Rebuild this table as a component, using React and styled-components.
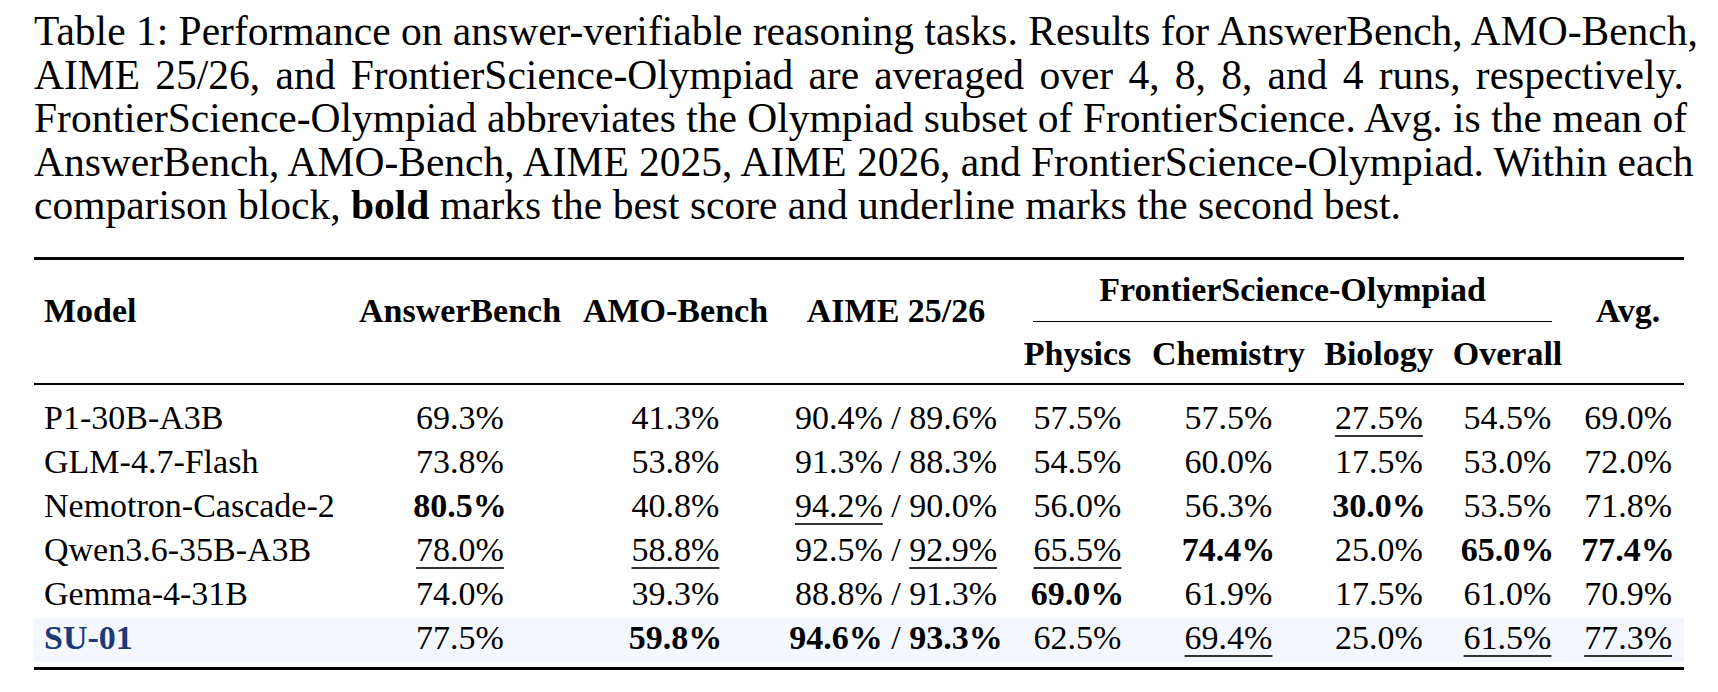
import styled, { createGlobalStyle } from 'styled-components'

const GlobalStyle = createGlobalStyle`
  html, body {
    margin: 0;
    padding: 0;
    background: #ffffff;
  }
  body {
    font-family: "Liberation Serif", "Times New Roman", serif;
    color: #000000;
  }
`

const Page = styled.div`
  width: 1718px;
  padding: 10px 0 0 34px;
  box-sizing: border-box;
`

const Caption = styled.div`
  width: 1650px;
  font-size: 41.5px;
  line-height: 43.5px;
  margin-bottom: 29.5px;
`

const CaptionLine = styled.div`
  text-align: ${(p) => (p.$last ? 'left' : 'justify')};
  text-align-last: ${(p) => (p.$last ? 'left' : 'justify')};
  white-space: nowrap;
`

const Table = styled.table`
  width: 1650px;
  table-layout: fixed;
  border-collapse: collapse;
  font-size: 34px;
  border-top: 3px solid #000;
  border-bottom: 3px solid #000;
`

const HeadRow = styled.tr`
  border-bottom: ${(p) => (p.$rule ? '2px solid #000' : 'none')};
`

const HeadCell = styled.th`
  font-weight: bold;
  line-height: 40px;
  padding: 31px 0 0 ${(p) => (p.$left ? '10px' : '0')};
  text-align: ${(p) => (p.$left ? 'left' : 'center')};
  vertical-align: top;
  white-space: nowrap;
`

const GroupCell = styled.th`
  font-weight: bold;
  line-height: 40px;
  padding: 10px 20px 0;
  text-align: center;
  white-space: nowrap;
`

const GroupLabel = styled.div`
  padding-bottom: 11px;
  border-bottom: 1.5px solid #000;
`

const SubCell = styled.th`
  font-weight: bold;
  line-height: 40px;
  padding: 12px 0 9px;
  text-align: center;
  white-space: nowrap;
`

const Row = styled.tr`
  background: ${(p) => (p.$hl ? '#f4f7fd' : 'transparent')};
`

const Cell = styled.td`
  line-height: 40px;
  padding: ${(p) => (p.$first ? '13px' : '0')} 0 4px ${(p) => (p.$left ? '10px' : '0')};
  text-align: ${(p) => (p.$left ? 'left' : 'center')};
  white-space: nowrap;
`

const ModelName = styled.span`
  font-weight: ${(p) => (p.$ours ? 'bold' : 'normal')};
  color: ${(p) => (p.$ours ? '#1c3a78' : '#000')};
`

const Val = styled.span`
  font-weight: ${(p) => (p.$bold ? 'bold' : 'normal')};
  text-decoration: ${(p) => (p.$under ? 'underline' : 'none')};
  text-decoration-thickness: 2px;
  text-underline-offset: 6px;
  text-decoration-color: #333;
  text-decoration-skip-ink: none;
`

const SpacerRow = styled.tr`
  height: 6px;
`

const cols = [314, 224, 207, 234, 129, 173, 128, 129, 112]

const rows = [
  ['P1-30B-A3B', '69.3%', '41.3%', ['90.4%', '89.6%'], '57.5%', '57.5%', '_27.5%', '54.5%', '69.0%'],
  ['GLM-4.7-Flash', '73.8%', '53.8%', ['91.3%', '88.3%'], '54.5%', '60.0%', '17.5%', '53.0%', '72.0%'],
  ['Nemotron-Cascade-2', '*80.5%', '40.8%', ['_94.2%', '90.0%'], '56.0%', '56.3%', '*30.0%', '53.5%', '71.8%'],
  ['Qwen3.6-35B-A3B', '_78.0%', '_58.8%', ['92.5%', '_92.9%'], '_65.5%', '*74.4%', '25.0%', '*65.0%', '*77.4%'],
  ['Gemma-4-31B', '74.0%', '39.3%', ['88.8%', '91.3%'], '*69.0%', '61.9%', '17.5%', '61.0%', '70.9%'],
  ['SU-01', '77.5%', '*59.8%', ['*94.6%', '*93.3%'], '62.5%', '_69.4%', '25.0%', '_61.5%', '_77.3%'],
]

function Score({ s }) {
  const bold = s[0] === '*'
  const under = s[0] === '_'
  const text = bold || under ? s.slice(1) : s
  return <Val $bold={bold} $under={under}>{text}</Val>
}

export default function App() {
  return (
    <Page>
      <GlobalStyle />
      <Caption>
        <CaptionLine>
          Table 1: Performance on answer-verifiable reasoning tasks. Results for AnswerBench, AMO-Bench,
        </CaptionLine>
        <CaptionLine>
          AIME 25/26, and FrontierScience-Olympiad are averaged over 4, 8, 8, and 4 runs, respectively.
        </CaptionLine>
        <CaptionLine>
          FrontierScience-Olympiad abbreviates the Olympiad subset of FrontierScience. Avg. is the mean of
        </CaptionLine>
        <CaptionLine>
          AnswerBench, AMO-Bench, AIME 2025, AIME 2026, and FrontierScience-Olympiad. Within each
        </CaptionLine>
        <CaptionLine $last>
          comparison block, <b>bold</b> marks the best score and underline marks the second best.
        </CaptionLine>
      </Caption>

      <Table>
        <colgroup>
          {cols.map((w, i) => (
            <col key={i} style={{ width: w }} />
          ))}
        </colgroup>
        <thead>
          <HeadRow>
            <HeadCell rowSpan={2} $left>Model</HeadCell>
            <HeadCell rowSpan={2}>AnswerBench</HeadCell>
            <HeadCell rowSpan={2}>AMO-Bench</HeadCell>
            <HeadCell rowSpan={2}>AIME 25/26</HeadCell>
            <GroupCell colSpan={4}>
              <GroupLabel>FrontierScience-Olympiad</GroupLabel>
            </GroupCell>
            <HeadCell rowSpan={2}>Avg.</HeadCell>
          </HeadRow>
          <HeadRow $rule>
            <SubCell>Physics</SubCell>
            <SubCell>Chemistry</SubCell>
            <SubCell>Biology</SubCell>
            <SubCell>Overall</SubCell>
          </HeadRow>
        </thead>
        <tbody>
          {rows.map((r, i) => {
            const ours = r[0] === 'SU-01'
            return (
              <Row key={r[0]} $hl={ours}>
                <Cell $left $first={i === 0}>
                  <ModelName $ours={ours}>{r[0]}</ModelName>
                </Cell>
                {r.slice(1).map((v, j) => (
                  <Cell key={j} $first={i === 0}>
                    {Array.isArray(v) ? (
                      <>
                        <Score s={v[0]} /> / <Score s={v[1]} />
                      </>
                    ) : (
                      <Score s={v} />
                    )}
                  </Cell>
                ))}
              </Row>
            )
          })}
          <SpacerRow>
            <td colSpan={9} />
          </SpacerRow>
        </tbody>
      </Table>
    </Page>
  )
}
